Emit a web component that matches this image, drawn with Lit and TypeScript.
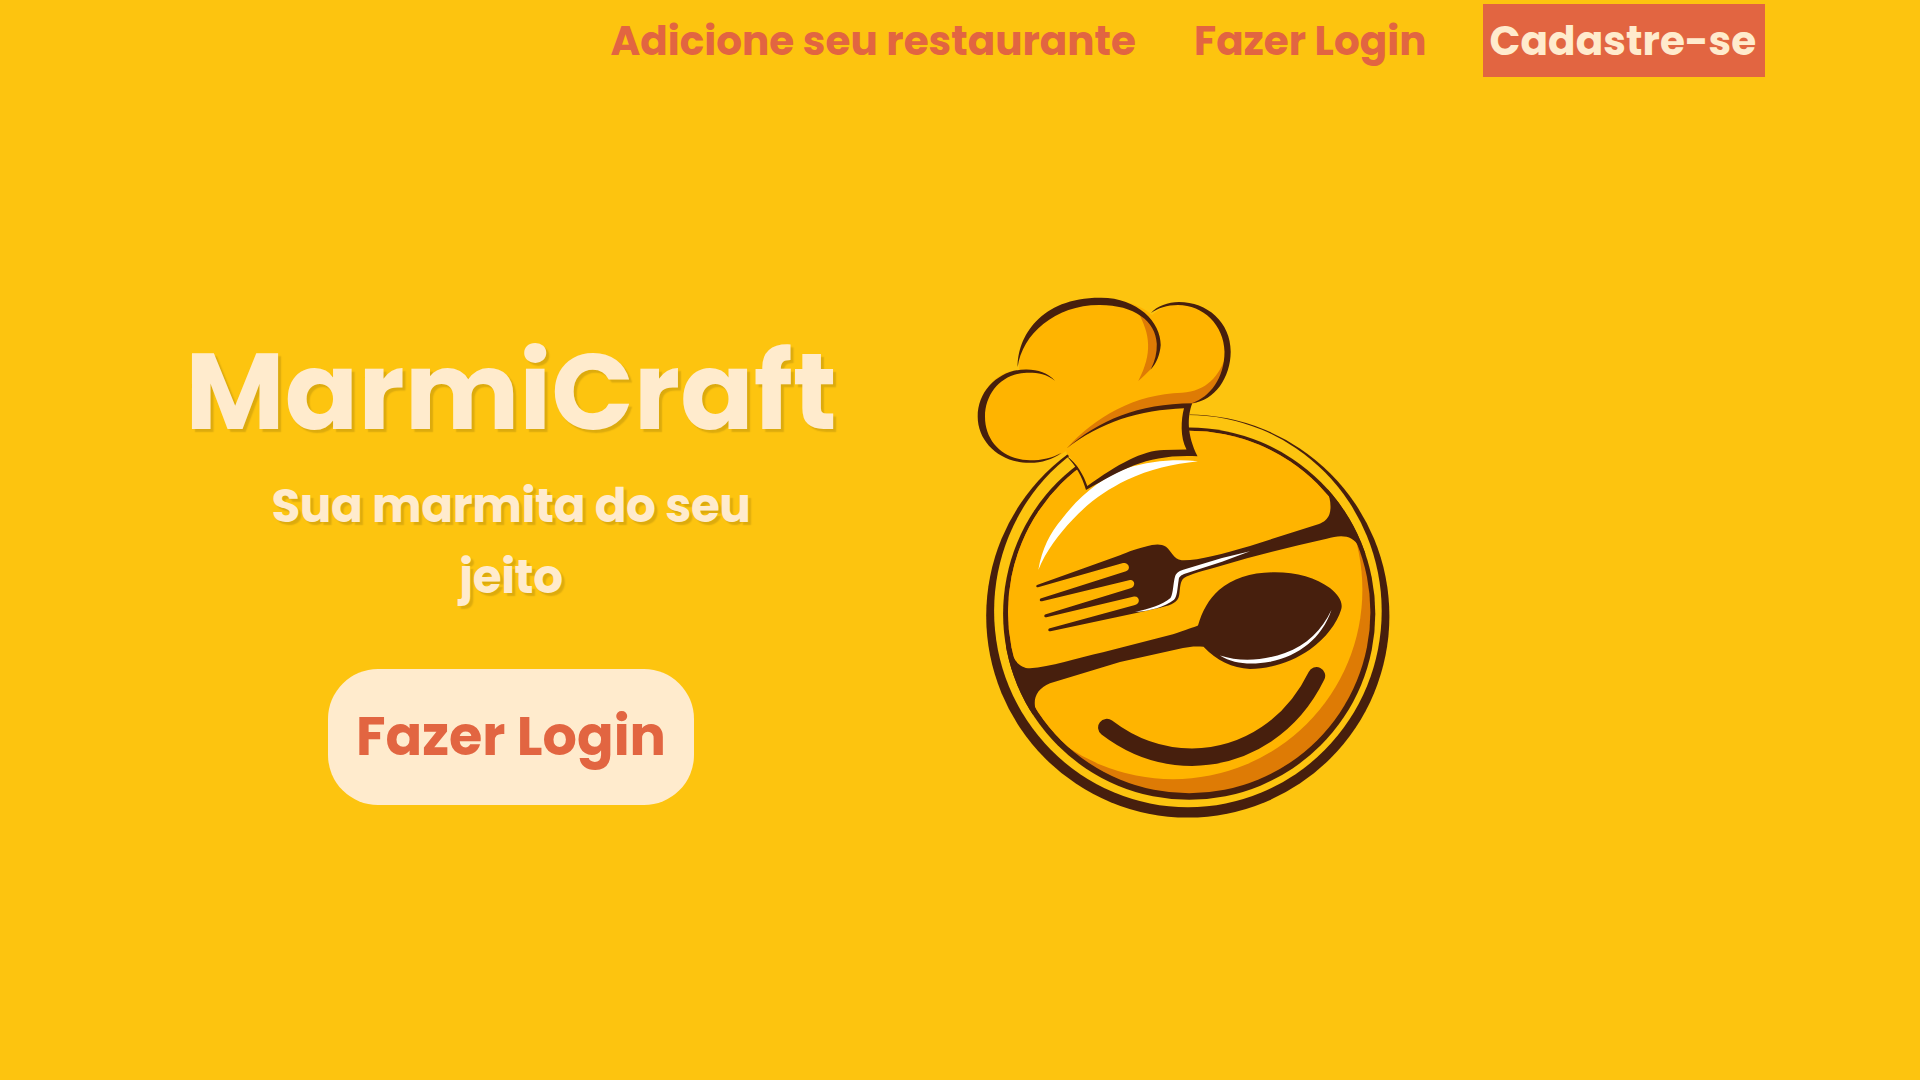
import { LitElement, html, css, svg } from "lit";
import { customElement } from "lit/decorators.js";

@customElement("marmi-logo")
class MarmiLogo extends LitElement {
  static styles = css`
    :host { display: block; width: 440px; height: 550px; }
    .art { display: block; width: 440px; height: 550px; }
    .dark { fill: #471f0d; }
    .page { fill: #fdc40f; }
    .gold { fill: #ffb400; }
    .shade { fill: #de7b05; }
    .white { fill: #fff; }
    .smile { fill: none; stroke: #471f0d; stroke-width: 17.4; stroke-linecap: round; }
  `;
  render() {
    return html`<svg class="art" viewBox="0 0 440 550" aria-hidden="true">
      <defs>
        <clipPath id="plate"><circle cx="229.2" cy="332" r="181.2" /></clipPath>
        <clipPath id="rim"><circle cx="229.2" cy="333.7" r="186.1" /></clipPath>
      </defs>
      ${svg`
      <circle class="dark" cx="227.8" cy="336" r="201.6" />
      <ellipse class="page" cx="227.9" cy="331.1" rx="193.8" ry="196.2" />
      <circle class="dark" cx="229.2" cy="333.7" r="186.1" />
      <g clip-path="url(#plate)">
        <circle class="shade" cx="229.2" cy="332" r="182" />
        <circle class="gold" cx="213" cy="309.8" r="189.4" />
      </g>
      <path class="white" d="M78.3 290C82 269 90 253 101.7 239.3C120 215 143 197 166.7 188.3C190 181 214 179 238 181.2C213 184 190 189 166.7 200C146 210 128 223 113 239.3C99 254 86 271 78.3 290Z" />
      <g clip-path="url(#rim)">
        <path class="dark" d="M366.5 210C370.5 217 371.5 228 369.5 234C367.5 239.5 364 242 359 244L290 266C262 274 237 281 221.7 280.3C213 279 211.5 271 206 266.8C202 264 197 264 192 265C178 268 168 272 160 275.2L77 305C75.7 306 76.2 307.5 78 307.3L163 283C168.5 282 171.5 289 166 291.3L80.5 318.5C79 320 80 321.5 82 321.2L170 300C175 299.5 176 306.5 170.5 308.2L85 334.5C83.5 336 84.5 337.5 86.5 337.2L174 316.6C180 316 180.5 323.5 175 325L89 348.5C87.5 350 88.5 351.5 90.5 351.2L175 333.3L200 327.8C213 324.5 218 322 219.2 315C220.2 308 220 301 224 298C230 294 243 291 262 285.5C297 275 332 266.5 366.7 258.8C381 254.5 393 255 399 267L401 272L440 290L440 170Z" />
        <path class="dark" d="M49.5 366C53 381 60 388.3 70 388.3C90 387 117 378 143 372.2L213 354.3C226 350 234 347 238 345.5C242 331 249 319 259 310C273 298 292 292.3 315 292.3C337 292.3 356 298 370 308C379 315 383.5 323 381 330C377 343 366 358 350 369.5C332 382 310 389 290 389C272 388 257 381 243.5 366.8C236 366 230 366.5 223 368L160 382L90 403.3C76 409 72 420 76.5 432L20 470L10 366Z" />
      </g>
      <path class="white" d="M175 332C189 329 202 325 210.5 318C213.5 313 213 303 215.2 296C217 292 220 291 224 289.6L262 278L290 271.3L262 281.8L224 294C220 296 219 297 218.7 300C217.3 308 217.5 316 214 319.8C205 327 190 331 175 332Z" />
      <path class="white" d="M260 375.6C274 384.5 292 385 310 381.8C339 376 362 358 371.4 330C362 350 347 365 325 373C302 381 280 382 260 375.6Z" />
      <path class="smile" d="M146.8 447.5C171 466 200 477.2 232 477.2C288 476.5 333 444 356.5 395.8" />

      <path class="gold" d="M106 171C89 184 61 185 41 172C17 156 12 126 28 107C36 96 46 91 59 90C59 60 80 30 112 22C142 13 177 21 192 35C212 18 241 20 256 38C274 58 272 88 256 108C249 117 242 122 231 124L228 147L236 175C195 175 162 184 126 209C123 194 116 183 107 174Z" />
      <path class="shade" d="M178 32C190 54 193 73 178.3 101C183 97 187 93 190.7 89.3C203 72 201 49 187 36Z" />
      <path class="shade" d="M266 76C259 96 247 111 222 112.8C175 114 135 137 107 168C138 145 175 126 233 123.5C252 119 266 98 266 76Z" />
      <path class="dark" d="M95 100.8C86 93.5 77 92.5 66.7 92.7C42 93.5 25 113 25 136.7C25 162 44 180 70 180.3C82 180.3 92 178 101.7 172.7C92 179.5 82 182.8 70 182.8C40 183 17.7 162 17.7 136.7C17.7 110 40 89 66.7 89.5C78 89.5 88 93 95 100.8Z" />
      <path class="dark" d="M57.7 87C57.5 57 80 17.7 140 17.7C177 17.2 201 42 200.7 65C200 75 196 84 190.7 89.5C195 81 197 73 196.8 64C196 41 174 25 140 25C96 24.5 62 54 57.7 87Z" />
      <path class="dark" d="M191 33C197 26 208 22 219 22C247 22 270.7 42 270.7 71.7C270.5 97 255 121 232 123C250 117 264.5 98 264.5 71.7C264 45 243 25 218 25C207 25 198 28 191 33Z" />
      <path class="dark" fill-rule="evenodd" d="M106 169C139 140 178 124 232.3 123.3C227 137 227 155 237.5 176.3C188 174 165 188 126 210C122 196 116 186 106 175.5C117 183 124 196 127.3 206C158 184 182 170.5 204 170L226.5 169.5C220 157 221 140 224 128.3C180 130 140 142 106 169Z" />
      `}
    </svg>`;
  }
}

@customElement("app-root")
class AppRoot extends LitElement {
  static styles = css`
    :host { display: block; width: 1920px; height: 1080px; overflow: hidden; background: #fdc40f; font-family: Poppins, Inter, "Liberation Sans", sans-serif; font-weight: 700; }
    .nav { display: grid; grid-template-columns: 526px 231px 282.5px; column-gap: 57.5px; justify-content: end; align-items: center; height: 80px; padding-right: 155px; box-sizing: border-box; font-size: 40.5px; line-height: 73px; color: #e26541; white-space: nowrap; }
    .signup { background: #e26541; color: #ffebcd; padding-left: 7px; letter-spacing: 0.1px; }
    .hero { display: flex; }
    .intro { display: flex; flex-direction: column; align-items: center; width: 700px; margin-left: 161px; padding-top: 232px; text-align: center; color: #ffebcd; text-shadow: 3px 3px 1.5px rgba(0, 0, 0, 0.13); white-space: nowrap; }
    .title { margin: 0; font-size: 108.3px; line-height: 158px; font-weight: 700; }
    .tagline { margin: 0; font-size: 46.8px; line-height: 71px; letter-spacing: -0.35px; }
    .login { display: flex; justify-content: center; width: 366px; height: 135.5px; margin-top: 57px; border-radius: 50px; background: #ffebcd; color: #e26541; font-size: 54px; line-height: 135px; text-shadow: none; }
    .logo { margin: 200px 0 0 99px; }
  `;
  render() {
    return html`
      <nav class="nav">
        <a>Adicione seu restaurante</a>
        <a>Fazer Login</a>
        <a class="signup">Cadastre-se</a>
      </nav>
      <main class="hero">
        <section class="intro">
          <h1 class="title">MarmiCraft</h1>
          <p class="tagline">Sua marmita do seu<br />jeito</p>
          <a class="login">Fazer Login</a>
        </section>
        <marmi-logo class="logo"></marmi-logo>
      </main>`;
  }
}
